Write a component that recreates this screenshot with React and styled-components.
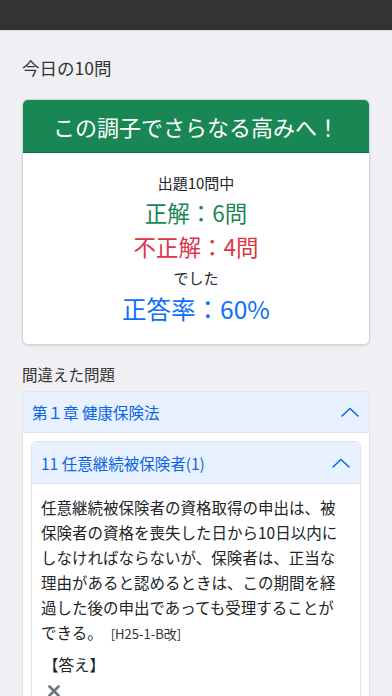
import React from 'react';
import styled, { createGlobalStyle } from 'styled-components';

const GlobalStyle = createGlobalStyle`
  html, body {
    margin: 0;
    padding: 0;
    background: #efeff4;
  }
  body {
    font-family: "Noto Sans CJK JP", "Noto Sans", sans-serif;
    color: #212529;
    -webkit-font-smoothing: antialiased;
  }
`

const TopBar = styled.div`
  height: 30px;
  background: #333333;
  border-bottom: 1px solid #d9d9de;
`

const Page = styled.main`
  padding: 0 22px;
`

const PageTitle = styled.h1`
  margin: 0;
  padding-top: 23px;
  height: 45px;
  line-height: 28px;
  font-size: 17.5px;
  font-weight: 400;
  color: #333;
`

const ResultCard = styled.section`
  background: #fff;
  border: 1px solid #d6d6da;
  border-radius: 6px;
  overflow: hidden;
  box-shadow: 0 1px 2px rgba(0, 0, 0, 0.12);
`

const CardHeader = styled.div`
  background: #198754;
  color: #fff;
  height: 52px;
  display: flex;
  align-items: center;
  justify-content: center;
  font-size: 22px;
  border-bottom: 1px solid #146c43;
`

const CardBody = styled.div`
  display: flex;
  flex-direction: column;
  align-items: center;
  padding: 18px 0 19px;
`

const Line = styled.div`
  font-size: ${p => p.size}px;
  line-height: ${p => p.lh}px;
  color: ${p => p.color || '#212529'};
`

const SectionLabel = styled.h2`
  margin: 0;
  padding-top: 16px;
  height: 30px;
  line-height: 26px;
  font-size: 15.5px;
  font-weight: 400;
  color: #333;
`

const Accordion = styled.div`
  border: 1px solid #dfe2e8;
  border-radius: 6px;
  background: #fff;
  overflow: hidden;
`

const AccordionHeader = styled.div`
  height: ${p => (p.inner ? '41px' : '40px')};
  display: flex;
  align-items: center;
  justify-content: space-between;
  padding: 0 10px 0 9px;
  background: #e7f1ff;
  color: #0c63e4;
  font-size: 15.5px;
  border-bottom: 1px solid #dfe2e8;
`

const AccordionBody = styled.div`
  padding: ${p => (p.inner ? '11px 18px 0 9px' : '8px 8px 0 8px')};
`

const QuestionText = styled.p`
  margin: 0;
  font-size: 15.5px;
  line-height: 25px;
  color: #212529;
  word-break: break-all;
`

const SourceTag = styled.span`
  display: inline-block;
  font-size: 13px;
  line-height: 25px;
  margin-left: 8px;
  color: #333;
`

const AnswerLabel = styled.div`
  font-size: 15.5px;
  line-height: 30px;
  margin-top: 3px;
  padding-left: 2px;
`

const AnswerMark = styled.div`
  height: 24px;
  display: flex;
  align-items: center;
  padding-left: 7px;
`

const Chevron = () => (
  <svg width="18" height="10" viewBox="0 0 18 10" fill="none">
    <path d="M1 9 L9 1.5 L17 9" stroke="#0c63e4" strokeWidth="1.5" strokeLinecap="round" strokeLinejoin="round" />
  </svg>
)

const Cross = () => (
  <svg width="12" height="12" viewBox="0 0 12 12">
    <path d="M1.5 1.5 L10.5 10.5 M10.5 1.5 L1.5 10.5" stroke="#6c757d" strokeWidth="2.6" strokeLinecap="round" />
  </svg>
)

const App = () => {
  return (
    <>
      <GlobalStyle />
      <TopBar />
      <Page>
        <PageTitle>今日の10問</PageTitle>

        <ResultCard>
          <CardHeader>この調子でさらなる高みへ！</CardHeader>
          <CardBody>
            <Line size={15} lh={24}>出題10問中</Line>
            <Line size={22.5} lh={34} color="#198754">正解：6問</Line>
            <Line size={22.5} lh={34} color="#dc3545">不正解：4問</Line>
            <Line size={15} lh={30}>でした</Line>
            <Line size={24.5} lh={32} color="#0d6efd">正答率：60%</Line>
          </CardBody>
        </ResultCard>

        <SectionLabel>間違えた問題</SectionLabel>

        <Accordion>
          <AccordionHeader>
            <span>第１章 健康保険法</span>
            <Chevron />
          </AccordionHeader>
          <AccordionBody>
            <Accordion>
              <AccordionHeader inner>
                <span>11 任意継続被保険者(1)</span>
                <Chevron />
              </AccordionHeader>
              <AccordionBody inner>
                <QuestionText>
                  任意継続被保険者の資格取得の申出は、被保険者の資格を喪失した日から10日以内にしなければならないが、保険者は、正当な理由があると認めるときは、この期間を経過した後の申出であっても受理することができる。
                  <SourceTag>[H25-1-B改]</SourceTag>
                </QuestionText>
                <AnswerLabel>【答え】</AnswerLabel>
                <AnswerMark>
                  <Cross />
                </AnswerMark>
              </AccordionBody>
            </Accordion>
          </AccordionBody>
        </Accordion>
      </Page>
    </>
  )
}

export default App;
